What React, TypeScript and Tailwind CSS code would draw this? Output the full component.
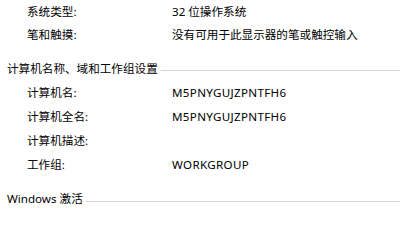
import React from "react";

const font = {
  fontFamily: '"Noto Sans", "Noto Sans CJK SC", sans-serif',
};

function Row({
  label,
  value,
  h = "h-[24px]",
  latin = false,
}: {
  label: string;
  value: string;
  h?: string;
  latin?: boolean;
}) {
  return (
    <div className={`flex items-center ${h}`}>
      <div className="w-[172px] pl-[27px] shrink-0">{label}</div>
      <div className={latin ? "tracking-[0.33px]" : ""}>{value}</div>
    </div>
  );
}

function Header({ title, className = "" }: { title: string; className?: string }) {
  return (
    <div className={`flex items-center h-[24px] pl-[7px] ${className}`}>
      <span className="whitespace-nowrap">{title}</span>
      <div className="flex-1 h-px bg-[#d4d4d4] ml-[3px] mt-[4px]" />
    </div>
  );
}

export default function App() {
  return (
    <div
      className="w-[400px] h-[205px] overflow-hidden bg-white text-[11.6px] text-black leading-none"
      style={font}
    >
      <Row label="系统类型:" value="32 位操作系统" h="h-[23px]" />
      <Row label="笔和触摸:" value="没有可用于此显示器的笔或触控输入" h="h-[23px]" />
      <Header title="计算机名称、域和工作组设置" className="mt-[10.7px]" />
      <Row label="计算机名:" value="M5PNYGUJZPNTFH6" latin />
      <Row label="计算机全名:" value="M5PNYGUJZPNTFH6" latin />
      <Row label="计算机描述:" value="" />
      <Row label="工作组:" value="WORKGROUP" latin />
      <Header title="Windows 激活" className="mt-[10.5px]" />
    </div>
  );
}
